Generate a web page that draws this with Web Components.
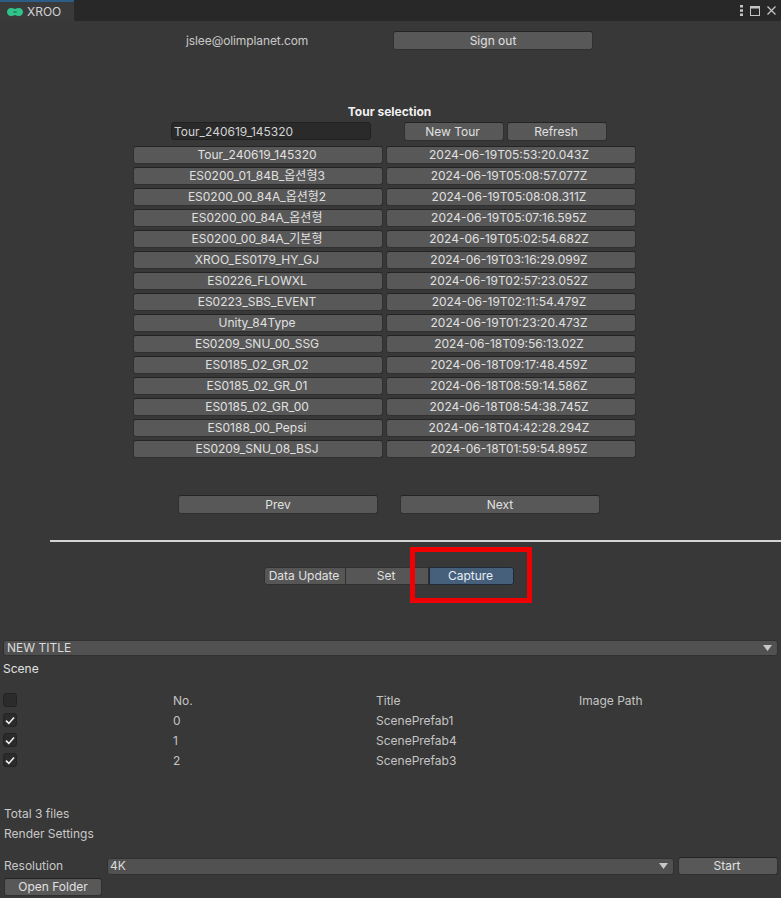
<!DOCTYPE html>
<html lang="en">
<head>
<meta charset="utf-8">
<title>XROO</title>
<style>
  html, body { margin: 0; height: 898px; overflow: hidden; background: #383838; }
  body { font: 12px/14px Inter, "Noto Sans CJK KR", sans-serif; color: #d2d2d2; }
</style>
</head>
<body>
<xr-window></xr-window>

<script>
// Rows of the tour list: name, created at
const TOURS = [
  ['Tour_240619_145320', '2024-06-19T05:53:20.043Z'],
  ['ES0200_01_84B_옵션형3', '2024-06-19T05:08:57.077Z'],
  ['ES0200_00_84A_옵션형2', '2024-06-19T05:08:08.311Z'],
  ['ES0200_00_84A_옵션형', '2024-06-19T05:07:16.595Z'],
  ['ES0200_00_84A_기본형', '2024-06-19T05:02:54.682Z'],
  ['XROO_ES0179_HY_GJ', '2024-06-19T03:16:29.099Z'],
  ['ES0226_FLOWXL', '2024-06-19T02:57:23.052Z'],
  ['ES0223_SBS_EVENT', '2024-06-19T02:11:54.479Z'],
  ['Unity_84Type', '2024-06-19T01:23:20.473Z'],
  ['ES0209_SNU_00_SSG', '2024-06-18T09:56:13.02Z'],
  ['ES0185_02_GR_02', '2024-06-18T09:17:48.459Z'],
  ['ES0185_02_GR_01', '2024-06-18T08:59:14.586Z'],
  ['ES0185_02_GR_00', '2024-06-18T08:54:38.745Z'],
  ['ES0188_00_Pepsi', '2024-06-18T04:42:28.294Z'],
  ['ES0209_SNU_08_BSJ', '2024-06-18T01:59:54.895Z'],
];

const SCENES = [['0', 'ScenePrefab1'], ['1', 'ScenePrefab4'], ['2', 'ScenePrefab3']];

class Base extends HTMLElement {
  connectedCallback() {
    if (this.shadowRoot) return;
    const template = document.createElement('template');
    template.innerHTML = this.constructor.template;
    this.attachShadow({ mode: 'open' }).append(template.content.cloneNode(true));
  }
}

class XrButton extends Base {}
XrButton.template = `
  <style>
    :host {
      display: flex; align-items: center; justify-content: center;
      box-sizing: border-box; height: var(--h, 19px); width: var(--w, 100px);
      padding-right: var(--nudge, 0);
      background: #585858; border: 1px solid #303030; border-top-color: #242424;
      border-radius: 3px; color: #e0e0e0; white-space: nowrap;
    }
  </style>
  <slot></slot>
`;

class XrDropdown extends Base {}
XrDropdown.template = `
  <style>
    :host {
      display: flex; align-items: center; box-sizing: border-box;
      height: var(--dd-h, 17px); padding: 0 5px 0 var(--pad, 3px);
      background: #515151; border: 1px solid #303030; border-radius: 3px; color: #dcdcdc;
    }
    span { flex: 1; }
    svg { width: 9px; height: 6px; fill: #c8c8c8; }
  </style>
  <span><slot></slot></span>
  <svg viewBox="0 0 9 6"><path d="M0 0H9L4.5 6Z"/></svg>
`;

class XrCheck extends Base {}
XrCheck.template = `
  <style>
    :host {
      display: flex; align-items: center; justify-content: center;
      box-sizing: border-box; width: 14px; height: 14px;
      background: #2b2b2b; border: 1px solid #232323; border-radius: 3px;
    }
    svg { width: 10px; height: 9px; fill: none; stroke: #f0f0f0; stroke-width: 1.6; display: none; }
    :host([checked]) svg { display: block; }
  </style>
  <svg viewBox="0 0 10 9"><path d="M1 4.6 3.8 7.4 9 1.4"/></svg>
`;

class XrTabBar extends Base {}
XrTabBar.template = `
  <style>
    :host {
      display: flex; justify-content: space-between; height: 21px;
      background: #282828; color: #d2d2d2;
    }
    .tab {
      display: flex; align-items: center; gap: 4px; box-sizing: border-box;
      width: 74px; padding: 1px 0 0 7px; background: #3a3a3a; border-top: 2px solid #2c5d87;
    }
    .actions { display: flex; align-items: center; gap: 7px; padding: 0 5px 0 0; }
    svg { display: block; }
  </style>
  <div class="tab">
    <svg width="16" height="8" viewBox="0 0 16 8">
      <path fill="#2fc38a" d="M4 0C5.500 0 6.600.4 8 .9 9.400.4 10.500 0 12 0c2.400 0 4 1.700 4 4s-1.600 4-4 4c-1.500 0-2.600-.4-4-.9C6.600 7.600 5.500 8 4 8 1.600 8 0 6.300 0 4s1.600-4 4-4Z"/>
      <path fill="#1c8a62" d="M5.500 4C6.500 3.300 7.200 3 8 3s1.500.3 2.500 1C9.500 4.700 8.800 5 8 5s-1.500-.3-2.500-1Z"/>
    </svg>
    <span>XROO</span>
  </div>
  <div class="actions">
    <svg width="3" height="11" viewBox="0 0 3 11" fill="#c4c4c4">
      <rect y="0" width="3" height="2.500"/><rect y="4.300" width="3" height="2.500"/><rect y="8.500" width="3" height="2.500"/>
    </svg>
    <svg width="10" height="10" viewBox="0 0 10 10" fill="none" stroke="#c4c4c4">
      <rect x=".5" y=".5" width="9" height="9"/><path d="M0 1.500H10" stroke-width="2"/>
    </svg>
    <svg width="9" height="9" viewBox="0 0 9 9" fill="none" stroke="#c4c4c4" stroke-width="1.300">
      <path d="M.5.5 8.500 8.500M8.500.5.500 8.500"/>
    </svg>
  </div>
`;

class XrTourRow extends Base {
  connectedCallback() {
    super.connectedCallback();
    const [name, date] = this.shadowRoot.querySelectorAll('xr-button');
    name.textContent = this.getAttribute('data-name');
    date.textContent = this.getAttribute('data-date');
  }
}
XrTourRow.template = `
  <style>
    :host { display: flex; gap: 3px; --w: 250px; --h: 18px; }
    .name { --nudge: 2px; }
    .date { --nudge: 4px; }
  </style>
  <xr-button class="name"></xr-button>
  <xr-button class="date"></xr-button>
`;

class XrTourList extends Base {
  connectedCallback() {
    super.connectedCallback();
    const list = this.shadowRoot.getElementById('rows');
    TOURS.forEach(([name, date]) => {
      const row = document.createElement('xr-tour-row');
      row.setAttribute('data-name', name);
      row.setAttribute('data-date', date);
      list.append(row);
    });
  }
}
XrTourList.template = `
  <style>
    :host { display: block; }
    h2 {
      margin: 0; height: 14px; font: 700 12px/14px Inter, sans-serif;
      color: #f0f0f0; text-align: center; padding-right: 2px;
    }
    .tools { display: flex; margin: 3px 0 5px 171px; height: 19px; --nudge: 3px; }
    .input {
      box-sizing: border-box; width: 200px; height: 18px; padding: 0 2px; line-height: 17px;
      background: #2a2a2a; border: 1px solid #212121; border-radius: 3px; color: #d2d2d2;
    }
    .new { margin-left: 33px; }
    .refresh { margin-left: 3px; --nudge: 2px; }
    #rows { display: flex; flex-direction: column; gap: 3px; margin-left: 133px; }
    .pager { display: flex; gap: 22px; margin: 37px 0 0 178px; --w: 200px; }
  </style>
  <h2>Tour selection</h2>
  <div class="tools">
    <div class="input">Tour_240619_145320</div>
    <xr-button class="new">New Tour</xr-button>
    <xr-button class="refresh">Refresh</xr-button>
  </div>
  <div id="rows"></div>
  <div class="pager">
    <xr-button>Prev</xr-button>
    <xr-button>Next</xr-button>
  </div>
`;

class XrSegments extends Base {}
XrSegments.template = `
  <style>
    :host { display: flex; width: 250px; height: 18px; position: relative; }
    div {
      display: flex; align-items: center; justify-content: center; box-sizing: border-box;
      padding-right: 2px;
      background: #565656; border: 1px solid #303030; border-left-width: 0; color: #e0e0e0; white-space: nowrap;
    }
    .a { width: 82px; border-left-width: 1px; border-radius: 3px 0 0 3px; }
    .b { width: 83px; }
    .on {
      width: 85px; border-radius: 0 3px 3px 0;
      background: #46607c; border-color: #1f2a38; border-left-width: 1px; color: #e8eef4;
    }
    .mark {
      position: absolute; left: 146px; top: -20px; width: 122px; height: 56px; padding: 0;
      background: none; border: 5px solid #f00000; border-radius: 0;
    }
  </style>
  <div class="a">Data Update</div>
  <div class="b">Set</div>
  <div class="on">Capture</div>
  <div class="mark"></div>
`;

class XrSceneTable extends Base {
  connectedCallback() {
    super.connectedCallback();
    const table = this.shadowRoot.getElementById('table');
    SCENES.forEach(([no, title]) => {
      table.insertAdjacentHTML('beforeend',
        `<xr-check checked></xr-check><span>${no}</span><span>${title}</span><span></span>`);
    });
  }
}
XrSceneTable.template = `
  <style>
    :host { display: block; color: #c4c4c4; }
    #table {
      display: grid; grid-template-columns: 170px 203px 203px 1fr;
      grid-auto-rows: 20px; align-items: center; margin-left: 3px;
    }
    span { padding-top: 2px; }
  </style>
  <div id="table">
    <xr-check></xr-check><span>No.</span><span>Title</span><span>Image Path</span>
  </div>
`;

class XrWindow extends Base {}
XrWindow.template = `
  <style>
    :host { display: block; height: 898px; background: #383838; color: #c8c8c8; }
    .account { display: flex; align-items: center; margin-top: 10px; height: 19px; }
    .email { width: 393px; box-sizing: border-box; padding-left: 186px; color: #c8c8c8; letter-spacing: -.1px; }
    .account xr-button { --w: 200px; }
    xr-tour-list { margin-top: 55px; }
    hr { height: 2px; margin: 26px 0 0 50px; border: 0; background: #d4d4d4; }
    xr-segments { margin: 25px 0 0 264px; }
    .title { margin: 55px 3px 0; --dd-h: 16px; }
    .scene { margin: 6px 0 0 3px; height: 14px; color: #e0e0e0; }
    xr-scene-table { margin-top: 14px; }
    .foot { margin: 37px 0 0 4px; display: flex; flex-direction: column; gap: 6px; }
    .res { display: flex; align-items: center; gap: 4px; margin: 16px 3px 0 4px; --h: 18px; --pad: 2px; }
    .res label { width: 99px; }
    .res xr-dropdown { flex: 1; }
    .res xr-button { --nudge: 2px; }
    .open { margin: 3px 0 0 4px; --w: 98px; --h: 18px; }
  </style>
  <xr-tab-bar></xr-tab-bar>
  <div class="account">
    <div class="email">jslee@olimplanet.com</div>
    <xr-button>Sign out</xr-button>
  </div>
  <xr-tour-list></xr-tour-list>
  <hr>
  <xr-segments></xr-segments>
  <xr-dropdown class="title">NEW TITLE</xr-dropdown>
  <div class="scene">Scene</div>
  <xr-scene-table></xr-scene-table>
  <div class="foot">
    <div>Total 3 files</div>
    <div>Render Settings</div>
  </div>
  <div class="res">
    <label>Resolution</label>
    <xr-dropdown>4K</xr-dropdown>
    <xr-button>Start</xr-button>
  </div>
  <xr-button class="open">Open Folder</xr-button>
`;

customElements.define('xr-button', XrButton);
customElements.define('xr-dropdown', XrDropdown);
customElements.define('xr-check', XrCheck);
customElements.define('xr-tab-bar', XrTabBar);
customElements.define('xr-tour-row', XrTourRow);
customElements.define('xr-tour-list', XrTourList);
customElements.define('xr-segments', XrSegments);
customElements.define('xr-scene-table', XrSceneTable);
customElements.define('xr-window', XrWindow);
</script>
</body>
</html>
